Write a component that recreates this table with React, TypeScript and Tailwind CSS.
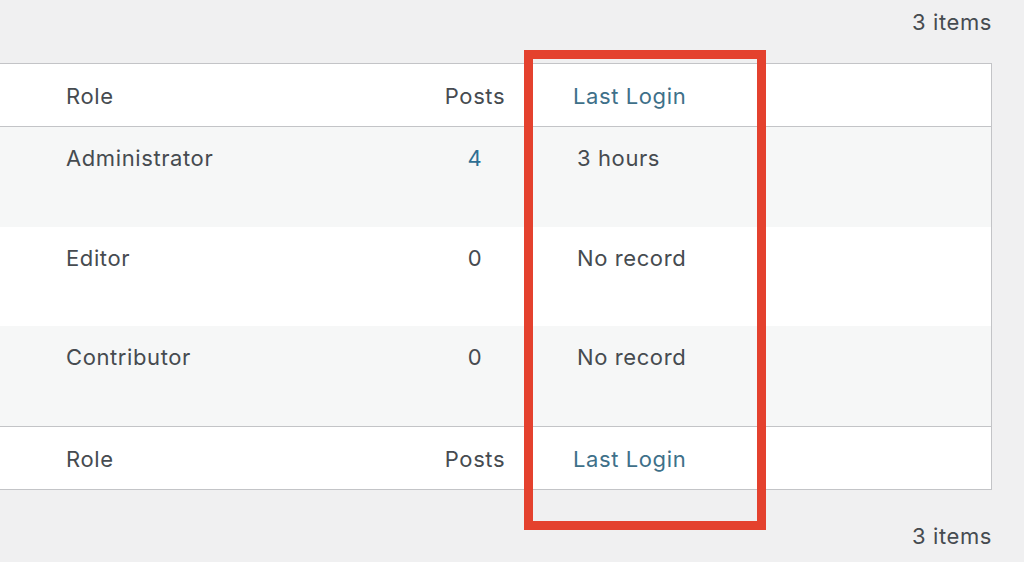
const rows = [
  { role: "Administrator", posts: "4", link: true, login: "3 hours", alt: true },
  { role: "Editor", posts: "0", link: false, login: "No record", alt: false },
  { role: "Contributor", posts: "0", link: false, login: "No record", alt: true },
];

function HeadRow({ top }: { top?: boolean }) {
  return (
    <div
      className={`grid grid-cols-[413px_124px_1fr] h-[63px] items-center bg-white border-[#c3c4c7] ${
        top ? "border-b" : "border-t"
      }`}
    >
      <div className="pl-[66px] pt-[2px]">Role</div>
      <div className="text-center pt-[2px]">Posts</div>
      <div className="pl-[36px] pt-[2px] text-[#3e7089]">Last Login</div>
    </div>
  );
}

export default function App() {
  return (
    <div
      className="relative w-[1024px] h-[562px] overflow-hidden bg-[#f0f0f1] text-[#464b50] text-[22px] leading-[30px] tracking-[0.6px]"
      style={{ fontFamily: "Inter, 'Noto Sans', sans-serif" }}
    >
      <div className="pr-[32px]">
        <div className="h-[63px] flex justify-end pt-[7px]">3 items</div>

        <div className="border-y border-r border-[#c3c4c7]">
          <HeadRow top />
          {rows.map(({ role, posts, link, login, alt }) => (
            <div
              key={role}
              className={`grid grid-cols-[413px_124px_1fr] h-[99.5px] pt-[16px] ${
                alt ? "bg-[#f6f7f7]" : "bg-white"
              }`}
            >
              <div className="pl-[66px]">{role}</div>
              <div className={`text-center ${link ? "text-[#2f6f93]" : ""}`}>
                {posts}
              </div>
              <div className="pl-[40px]">{login}</div>
            </div>
          ))}
          <HeadRow />
        </div>

        <div className="flex justify-end pt-[31px]">3 items</div>
      </div>

      {/* highlight annotation */}
      <div className="absolute left-[524px] top-[50px] w-[242px] h-[480px] border-[9px] border-[#e4412e]" />
    </div>
  );
}
